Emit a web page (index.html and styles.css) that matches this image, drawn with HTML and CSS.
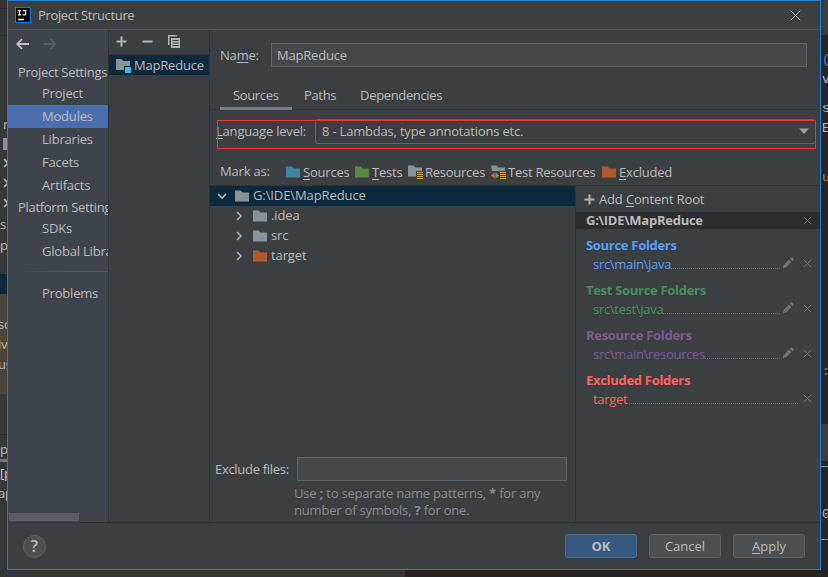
FILE: index.html
```html
<!DOCTYPE html>
<html lang="en">
<head>
<meta charset="UTF-8" />
<title>Project Structure</title>
<link rel="stylesheet" href="styles.css">
</head>
<body>
<!-- shared icons -->
<svg class="defs" width="0" height="0">
  <symbol id="folder" viewBox="0 0 14 12"><path d="M0 0.5h5.5l2 2H14V11.5H0z" fill="currentColor"/></symbol>
  <symbol id="chevron" viewBox="0 0 10 10"><path d="M3 1l4 4-4 4" fill="none" stroke="#afb1b3" stroke-width="1.6"/></symbol>
  <symbol id="cross" viewBox="0 0 9 9"><path d="M.8 .8l7.400 7.400M8.200 .8L.8 8.200" fill="none" stroke="currentColor"/></symbol>
  <symbol id="pencil" viewBox="0 0 12 12"><path d="M1 11l.6-3L7 2.6 9.4 5 4 10.4zM7.8 1.8L9 .6q.6-.4 1.2 0l1.2 1.2q.4.6 0 1.2L10.2 4.2z" fill="#6e7375"/></symbol>
  <symbol id="plus" viewBox="0 0 11 11"><path d="M4.5 0.5h2v4h4v2h-4v4h-2v-4h-4v-2h4z" fill="#afb1b3"/></symbol>
</svg>

<div class="desktop">
  <div class="behind left">
    <span class="l1">r</span>
    <span class="l2"></span>
    <svg class="l3"><use href="#chevron"/></svg>
    <svg class="l3"><use href="#chevron"/></svg>
    <svg class="l3"><use href="#chevron"/></svg>
    <span class="l4">s</span>
    <span class="l5">p</span>
    <span class="sel"></span>
    <div class="brown"><span>sc</span><span>iv</span><span>us</span></div>
    <div class="tool"><span class="tab">p</span><b>[p</b><span>ap</span></div>
  </div>

  <div class="dialog">
    <div class="titlebar">
      <svg width="16" height="16" viewBox="0 0 16 16"><rect x=".5" y=".5" width="15" height="15" fill="#000" stroke="#087cfa"/><path d="M2.800 3.700h3.400M4.500 3.700v4.200M2.800 7.900h3.400M7.800 3.700h2.800v3q0 1.200-1.200 1.200H7.600M3 12.500h6" fill="none" stroke="#fff" stroke-width="1.3"/></svg>
      <span>Project Structure</span>
      <svg class="close" width="11" height="11" viewBox="0 0 11 11"><path d="M.7.7l9.6 9.6M10.3.7L.7 10.3" stroke="#b8babb" fill="none"/></svg>
    </div>

    <div class="content">
      <div class="sidebar">
        <div class="nav">
          <svg width="14" height="12" viewBox="0 0 14 12"><path d="M13 6H2M6 1.2L1.200 6l4.800 4.8" fill="none" stroke="#c0c2c4" stroke-width="1.8"/></svg>
          <svg width="14" height="12" viewBox="0 0 14 12"><path d="M.5 6H12M7.5 1.2L12.3 6l-4.8 4.8" fill="none" stroke="#5d5f62" stroke-width="1.8"/></svg>
        </div>
        <div class="group">Project Settings</div>
        <div class="item">Project</div>
        <div class="item active">Modules</div>
        <div class="item">Libraries</div>
        <div class="item">Facets</div>
        <div class="item">Artifacts</div>
        <div class="group">Platform Settings</div>
        <div class="item">SDKs</div>
        <div class="item">Global Libraries</div>
        <div class="divider"></div>
        <div class="item">Problems</div>
        <div class="hscroll"></div>
      </div>

      <div class="modules">
        <div class="toolbar">
          <svg width="11" height="11"><use href="#plus"/></svg>
          <svg width="11" height="11"><path d="M.5 4.5h10v2H.5z" fill="#afb1b3"/></svg>
          <svg width="12" height="13" viewBox="0 0 12 13"><path d="M0 0h9v1.5H1.5V10H0z" fill="#afb1b3"/><path d="M3 3h9v10H3z" fill="#afb1b3"/><path d="M4.5 5.5h6M4.5 8h6M4.5 10.5h6" stroke="#3c3f41"/></svg>
        </div>
        <div class="module">
          <svg width="16" height="15" viewBox="0 0 16 15"><path d="M0 1h5.500l2 2H14v9H0z" fill="#87939a"/><path d="M8 8h8v7H8z" fill="#0d293e"/><path d="M9 9h6v6H9z" fill="#40b6e0"/></svg>
          <span>MapReduce</span>
        </div>
      </div>

      <div class="main">
        <div class="name-row"><label>Na<u>m</u>e:</label><div class="field">MapReduce</div></div>
        <div class="tabs">
          <div class="tab on">Sources</div>
          <div class="tab">Paths</div>
          <div class="tab">Dependencies</div>
        </div>
        <div class="language">
          <label><u>L</u>anguage level:</label>
          <div class="combo"><span>8 - Lambdas, type annotations etc.</span><svg width="10" height="6"><path d="M0 0.500h10L5 6z" fill="#9da0a2"/></svg></div>
          <div class="highlight"></div>
        </div>
        <div class="mark">
          <label>Mark as:</label>
          <span class="m1"><svg class="f blue"><use href="#folder"/></svg><u>S</u>ources</span>
          <span class="m2"><svg class="f green"><use href="#folder"/></svg><u>T</u>ests</span>
          <span class="m3"><svg width="16" height="14" viewBox="0 0 16 14"><path d="M0 .5h5.500l2 2H14V6H8v5.500H0z" fill="#87939a"/><path d="M9 7.500h6M9 9.500h6M9 11.500h6M9 13.500h6" stroke="#d9a343"/></svg>Resources</span>
          <span class="m4"><svg width="16" height="14" viewBox="0 0 16 14"><path d="M0 .5h5.500l2 2H14V6H1z" fill="#87939a"/><path d="M3.700 7.500v6L0 10.500z" fill="#f26522"/><path d="M4.500 7.500v6l3.500-3z" fill="#62b543"/><path d="M9 7.500h6M9 9.500h6M9 11.500h6M9 13.500h6" stroke="#d9a343"/></svg>Test Resources</span>
          <span class="m5"><svg class="f orange"><use href="#folder"/></svg><u>E</u>xcluded</span>
        </div>

        <div class="panes">
          <div class="tree-pane">
            <div class="tree">
              <div class="node root"><svg class="arrow open"><use href="#chevron"/></svg><svg class="f gray"><use href="#folder"/></svg><span>G:\IDE\MapReduce</span></div>
              <div class="node"><svg class="arrow"><use href="#chevron"/></svg><svg class="f gray"><use href="#folder"/></svg><span>.idea</span></div>
              <div class="node"><svg class="arrow"><use href="#chevron"/></svg><svg class="f gray"><use href="#folder"/></svg><span>src</span></div>
              <div class="node"><svg class="arrow"><use href="#chevron"/></svg><svg class="f orange"><use href="#folder"/></svg><span>target</span></div>
            </div>
            <div class="exclude"><label>Exclude files:</label><div class="field"></div></div>
            <div class="hint"><p>Use <b>;</b> to separate name patterns, <b>*</b> for any</p><p>number of symbols, <b>?</b> for one.</p></div>
          </div>

          <div class="roots">
            <div class="add"><svg width="11" height="11"><use href="#plus"/></svg><span>Add <u>C</u>ontent Root</span></div>
            <div class="root-title"><span>G:\IDE\MapReduce</span><svg class="x"><use href="#cross"/></svg></div>
            <div class="folders source">
              <h4>Source Folders</h4>
              <div class="path"><span>src\main\java</span><i></i><svg class="pen"><use href="#pencil"/></svg><svg class="x"><use href="#cross"/></svg></div>
            </div>
            <div class="folders test">
              <h4>Test Source Folders</h4>
              <div class="path"><span>src\test\java</span><i></i><svg class="pen"><use href="#pencil"/></svg><svg class="x"><use href="#cross"/></svg></div>
            </div>
            <div class="folders resource">
              <h4>Resource Folders</h4>
              <div class="path"><span>src\main\resources</span><i></i><svg class="pen"><use href="#pencil"/></svg><svg class="x"><use href="#cross"/></svg></div>
            </div>
            <div class="folders excluded">
              <h4>Excluded Folders</h4>
              <div class="path"><span>target</span><i></i><svg class="x"><use href="#cross"/></svg></div>
            </div>
          </div>
        </div>
      </div>
    </div>

    <div class="footer">
      <div class="help">?</div>
      <div class="btn ok">OK</div>
      <div class="btn">Cancel</div>
      <div class="btn"><span><u>A</u>pply</span></div>
    </div>
  </div>

  <div class="behind right">
    <div class="r-top"></div>
    <span class="r1">(</span>
    <span class="r2">v</span>
    <span class="r3">s</span>
    <span class="r4">E</span>
    <span class="r5">u</span>
    <span class="r6">:</span>
    <div class="r-tool"></div>
    <div class="r-line"></div>
    <span class="r7">0</span>
    <div class="r-line low"></div>
  </div>
  <div class="bottom"></div>
</div>
</body>
</html>
```
FILE: styles.css
```css
* { box-sizing: border-box; }
body {
  margin: 0;
  background: #2b2b2b;
  color: #bbbbbb;
  font: 13px/20px "Open Sans", "Noto Sans", sans-serif;
  letter-spacing: -0.2px;
}
svg { flex: none; display: block; }
u { text-underline-offset: 2px; text-decoration-thickness: 1px; }
.defs { position: absolute; }
.desktop {
  display: grid;
  grid-template-columns: 7px 814px 7px;
  grid-template-rows: 570px 7px;
  width: 828px;
  height: 577px;
  overflow: hidden;
}

/* editor window behind the dialog */
.behind { display: flex; flex-direction: column; overflow: hidden; white-space: nowrap; }
.behind span { display: block; height: 20px; flex: none; }
.left { background: linear-gradient(#333537 0 8px, #292b2c 8px 9px, #333537 9px 35px, #292b2c 35px 36px, #353739 36px); }
.left .l1 { margin-top: 114px; padding-left: 3px; }
.left .l2 { width: 4px; height: 12px; margin: 4px 0 8px 3px; background: #87939a; }
.left .l3 { width: 10px; height: 10px; margin: 0 0 10px 1px; }
.left .l4 { margin-top: -4px; }
.left .l5 { margin-top: 1px; }
.left .sel { height: 20px; margin-top: 19px; background: #0d293e; }
.brown { height: 100px; padding-top: 20px; background: #49453a; flex: none; }
.brown span, .tool span { margin-left: -2px; }
.tool { margin-top: 40px; border-top: 1px solid #292b2c; padding-top: 5px; }
.behind .tool .tab { height: 22px; padding: 0; margin: 0 0 1px; line-height: 18px; border-bottom: 3px solid #75797f; }
.tool b { display: block; font-weight: 400; height: 20px; color: #d0c4d0; }
.bottom { grid-column: 1 / 4; background: linear-gradient(90deg, #333537 405px, #242424 405px); }
.right { background: #262626; }
.right .r-top { height: 36px; background: #393c3e; border-bottom: 1px solid #292b2c; flex: none; }
.right span { font-family: "Liberation Mono", monospace; margin-left: 1px; }
.right .r1 { margin-top: 14px; color: #4a88c7; }
.right .r3 { margin-top: 9px; }
.right .r5 { margin-top: 29px; color: #cc7832; }
.right .r6 { margin-top: 174px; color: #8a8c8e; }
.r-tool { height: 37px; margin-top: 42px; background: #393c3e; flex: none; }
.right .r7 { margin-top: 38px; }
.r-line { height: 1px; margin-top: 5px; background: #999; flex: none; }
.r-line.low { margin-top: 14px; }

.dialog {
  display: flex;
  flex-direction: column;
  border: 1px solid #1f7fd0;
  background: #3c3f41;
  overflow: hidden;
}
.titlebar {
  display: flex;
  align-items: center;
  height: 29px;
  padding: 0 19px 0 7px;
  border-bottom: 1px solid #515355;
  flex: none;
}
.titlebar span { margin-left: 7px; letter-spacing: -0.35px; }
.titlebar .close { margin-left: auto; }
.content { display: flex; height: 493px; border-bottom: 1px solid #2f3133; flex: none; }

.sidebar {
  display: flex;
  flex-direction: column;
  width: 101px;
  padding-bottom: 1px;
  background: #3f434c;
  border-right: 1px solid #303234;
  white-space: nowrap;
  overflow: hidden;
  flex: none;
}
.nav { display: flex; gap: 13px; padding: 8px 0 0 8px; height: 32px; }
.group { height: 20px; padding-left: 10px; letter-spacing: -0.3px; }
.item { height: 23px; line-height: 22px; padding-left: 34px; }
.item.active { background: #4b6eaf; }
.divider { height: 1px; margin: 8px 0 10px 8px; background: linear-gradient(90deg, #3f434c, #56585e 50px); flex: none; }
.hscroll { width: 70px; height: 8px; margin: auto 0 0 1px; background: #5a5d64; }

.modules { width: 101px; border-right: 1px solid #303234; flex: none; }
.toolbar { display: flex; align-items: center; gap: 15px; height: 25px; padding: 0 0 2px 7px; border-bottom: 1px solid #323537; }
.module { display: flex; align-items: center; gap: 2px; height: 20px; padding-left: 7px; background: #0d293e; white-space: nowrap; }
.module span { padding-bottom: 1px; }

.main { display: flex; flex-direction: column; width: 610px; flex: none; }
.name-row { display: flex; align-items: center; height: 50px; padding: 0 13px 0 10px; }
.name-row label { width: 51px; }
.field { flex: 1; height: 24px; padding-left: 5px; line-height: 22px; background: #45494a; border: 1px solid #646464; }
.tabs { display: flex; height: 30px; padding-left: 10px; border-bottom: 1px solid #323537; }
.tab { padding: 5px 12px 0; height: 30px; letter-spacing: -0.35px; }
.tab.on { width: 72px; padding-left: 13px; border-bottom: 3px solid #7a7e84; }
.language { position: relative; display: flex; align-items: center; height: 42px; padding: 0 3px 0 6px; white-space: nowrap; }
.language label { width: 99px; padding-bottom: 1px; }
.combo { display: flex; align-items: center; justify-content: space-between; width: 501px; height: 25px; padding: 0 6px; border: 1px solid #646769; border-radius: 3px; }
.highlight { position: absolute; left: 7px; top: 10px; width: 599px; height: 29px; border: 1px solid #f5302f; }
.mark { display: flex; align-items: center; height: 33px; padding: 6px 0 0 10px; white-space: nowrap; }
.mark label { width: 66px; padding-bottom: 1px; }
.mark span { display: flex; align-items: center; }
.mark svg { margin-right: 3px; }
.f { width: 14px; height: 12px; }
.mark .m1 { width: 69px; }
.mark .m2 { width: 53px; }
.mark .m3 svg, .mark .m4 svg { margin-right: 1px; }
.mark .m3 { width: 83px; letter-spacing: -0.25px; }
.mark .m4 { width: 111px; letter-spacing: -0.25px; }
.blue { color: #3e86a0; }
.green { color: #548a40; }
.orange { color: #b0592f; }
.gray { color: #87939a; }

.panes { display: flex; flex: 1; border-top: 1px solid #323537; }
.tree-pane { display: flex; flex-direction: column; width: 366px; border-right: 1px solid #303234; }
.tree { height: 271px; }
.node { display: flex; align-items: center; height: 20px; padding-left: 24px; letter-spacing: -0.1px; }
.node.root { width: 365px; padding-left: 7px; background: #0d293e; }
.arrow { width: 10px; height: 10px; margin-right: 9px; }
.root .arrow { margin-right: 8px; }
.arrow.open { transform: rotate(90deg); }
.node span { margin-left: 4px; line-height: 18px; padding-bottom: 2px; }
.exclude { display: flex; align-items: center; height: 24px; padding: 0 8px 0 5px; white-space: nowrap; }
.exclude label { width: 82px; padding-bottom: 1px; letter-spacing: -0.3px; }
.hint { padding: 4px 0 0 84px; color: #8a8c8e; line-height: 17px; white-space: nowrap; }
.hint p { margin: 0; }

.roots { flex: 1; }
.add { display: flex; align-items: center; gap: 4px; height: 26px; padding: 0 0 0 8px; letter-spacing: -0.15px; }
.root-title { display: flex; align-items: center; justify-content: space-between; height: 17px; padding: 0 8px 0 10px; background: #2b2d2e; font-weight: 700; }
.root-title span { padding-bottom: 2px; letter-spacing: -0.25px; }
.folders { height: 45px; padding: 7px 8px 0 10px; }
.folders h4 { margin: 0; font-size: 13px; line-height: 19px; letter-spacing: -0.3px; }
.path { display: flex; align-items: center; height: 18px; padding-left: 7px; letter-spacing: -0.3px; }
.path span { padding-bottom: 1px; }
.path i { flex: 1; height: 1px; margin: 9px 0 0; background: repeating-linear-gradient(90deg, #686c6e 0 1px, transparent 1px 2px); }
.x { width: 9px; height: 9px; color: #6e7274; }
.path .x { margin: 0 0 2px 5px; }
.pen { width: 12px; height: 12px; margin: 0 0 2px 2px; }
.path .pen + .x { margin-left: 9px; }
.source { color: #589df6; }
.test { color: #498c5f; }
.resource { color: #7d5a94; }
.excluded { color: #ff5f5f; }

.footer { display: flex; align-items: center; gap: 12px; height: 46px; padding: 0 15px; letter-spacing: 0; }
.help { width: 23px; height: 23px; margin-right: auto; border: 1px solid #5e6162; border-radius: 50%; background: #4c5052; font-weight: 600; font-size: 16px; line-height: 21px; text-align: center; }
.btn { width: 72px; height: 24px; line-height: 23px; border: 1px solid #5e6162; border-radius: 3px; background: #4c5052; text-align: center; }
.btn.ok { background: #365880; border-color: #4c708c; font-weight: 700; }
```
